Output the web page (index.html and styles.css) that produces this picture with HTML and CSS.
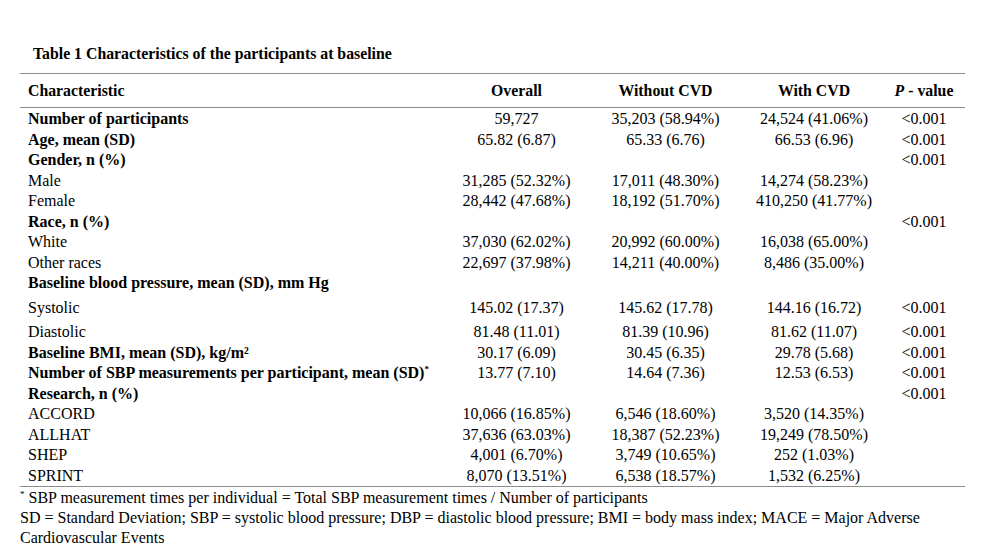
FILE: index.html
```html
<!DOCTYPE html>
<html>
<head>
<meta charset="utf-8">
<link rel="stylesheet" href="styles.css">
</head>
<body>
<div class="page">
  <div class="title">Table 1 Characteristics of the participants at baseline</div>
  <table class="data">
    <colgroup>
      <col class="c-name"><col class="c-overall"><col class="c-without"><col class="c-with"><col class="c-p">
    </colgroup>
    <thead>
      <tr>
        <th class="name">Characteristic</th>
        <th>Overall</th>
        <th>Without CVD</th>
        <th>With CVD</th>
        <th><i>P</i> - value</th>
      </tr>
    </thead>
    <tbody>
      <tr class="first"><td class="name b">Number of participants</td><td>59,727</td><td>35,203 (58.94%)</td><td>24,524 (41.06%)</td><td>&lt;0.001</td></tr>
      <tr><td class="name b">Age, mean (SD)</td><td>65.82 (6.87)</td><td>65.33 (6.76)</td><td>66.53 (6.96)</td><td>&lt;0.001</td></tr>
      <tr><td class="name b">Gender, n (%)</td><td></td><td></td><td></td><td>&lt;0.001</td></tr>
      <tr><td class="name">Male</td><td>31,285 (52.32%)</td><td>17,011 (48.30%)</td><td>14,274 (58.23%)</td><td></td></tr>
      <tr><td class="name">Female</td><td>28,442 (47.68%)</td><td>18,192 (51.70%)</td><td>410,250 (41.77%)</td><td></td></tr>
      <tr><td class="name b">Race, n (%)</td><td></td><td></td><td></td><td>&lt;0.001</td></tr>
      <tr><td class="name">White</td><td>37,030 (62.02%)</td><td>20,992 (60.00%)</td><td>16,038 (65.00%)</td><td></td></tr>
      <tr><td class="name">Other races</td><td>22,697 (37.98%)</td><td>14,211 (40.00%)</td><td>8,486 (35.00%)</td><td></td></tr>
      <tr><td class="name b" colspan="5">Baseline blood pressure, mean (SD), mm Hg</td></tr>
      <tr class="sys"><td class="name">Systolic</td><td>145.02 (17.37)</td><td>145.62 (17.78)</td><td>144.16 (16.72)</td><td>&lt;0.001</td></tr>
      <tr class="dia"><td class="name">Diastolic</td><td>81.48 (11.01)</td><td>81.39 (10.96)</td><td>81.62 (11.07)</td><td>&lt;0.001</td></tr>
      <tr><td class="name b">Baseline BMI, mean (SD), kg/m²</td><td>30.17 (6.09)</td><td>30.45 (6.35)</td><td>29.78 (5.68)</td><td>&lt;0.001</td></tr>
      <tr><td class="name b">Number of SBP measurements per participant, mean (SD)<sup>*</sup></td><td>13.77 (7.10)</td><td>14.64 (7.36)</td><td>12.53 (6.53)</td><td>&lt;0.001</td></tr>
      <tr><td class="name b">Research, n (%)</td><td></td><td></td><td></td><td>&lt;0.001</td></tr>
      <tr><td class="name">ACCORD</td><td>10,066 (16.85%)</td><td>6,546 (18.60%)</td><td>3,520 (14.35%)</td><td></td></tr>
      <tr><td class="name">ALLHAT</td><td>37,636 (63.03%)</td><td>18,387 (52.23%)</td><td>19,249 (78.50%)</td><td></td></tr>
      <tr><td class="name">SHEP</td><td>4,001 (6.70%)</td><td>3,749 (10.65%)</td><td>252 (1.03%)</td><td></td></tr>
      <tr class="last"><td class="name">SPRINT</td><td>8,070 (13.51%)</td><td>6,538 (18.57%)</td><td>1,532 (6.25%)</td><td></td></tr>
    </tbody>
  </table>
  <div class="notes">
    <p><sup>*</sup> SBP measurement times per individual = Total SBP measurement times / Number of participants</p>
    <p>SD = Standard Deviation; SBP = systolic blood pressure; DBP = diastolic blood pressure; BMI = body mass index; MACE = Major Adverse Cardiovascular Events</p>
  </div>
</div>
</body>
</html>
```

FILE: styles.css
```css
html, body {
  margin: 0;
  padding: 0;
  background: #ffffff;
}
body {
  font-family: "Liberation Serif", "Times New Roman", serif;
  color: #000;
  font-size: 16px;
}
.page {
  padding: 45px 0 0 20px;
  width: 945px;
}
.title {
  font-weight: bold;
  font-size: 15.8px;
  line-height: 18px;
  padding-left: 13px;
  margin-bottom: 10px;
}
.data {
  border-collapse: collapse;
  width: 945px;
  table-layout: fixed;
}
.c-name { width: 427px; }
.c-overall { width: 139px; }
.c-without { width: 159px; }
.c-with { width: 138px; }
.c-p { width: 82px; }
.data thead tr {
  border-top: 1.5px solid #8c8c8c;
  border-bottom: 1.5px solid #8c8c8c;
}
.data th {
  font-weight: bold;
  font-size: 15.8px;
  height: 33px;
  padding: 0;
  text-align: center;
  line-height: 18px;
  vertical-align: middle;
}
.data td {
  padding: 0;
  height: 20.5px;
  line-height: 20.5px;
  text-align: center;
  white-space: nowrap;
  vertical-align: bottom;
}
.data .name {
  text-align: left;
  padding-left: 8px;
}
.data .b { font-weight: bold; }
.data tr.first td { height: 21.5px; }
.data tr.sys td { height: 25px; }
.data tr.dia td { height: 24px; }
.data tr.last { border-bottom: 1.5px solid #8c8c8c; }
sup {
  font-size: 9px;
  line-height: 0;
  vertical-align: 6px;
}
.notes {
  padding-top: 1px;
  font-size: 16px;
}
.notes p {
  margin: 0;
  line-height: 20px;
}
```
